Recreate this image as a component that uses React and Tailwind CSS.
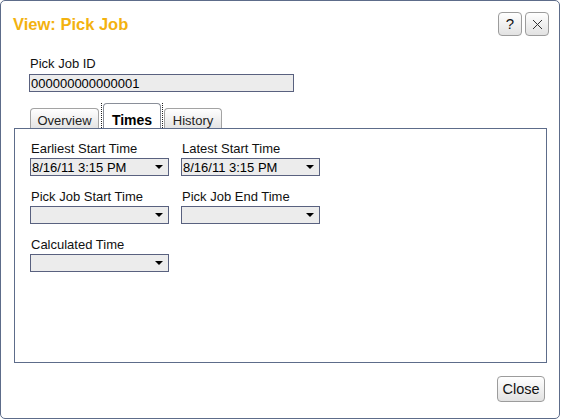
import React from 'react'

const FONT = "font-['Liberation_Sans',Arial,sans-serif]"

function Arrow() {
  return (
    <svg width="8" height="4" viewBox="0 0 8 4" className="shrink-0">
      <path d="M0 0H8L4 4Z" fill="#000" />
    </svg>
  )
}

function DateSelect({ value }) {
  return (
    <div className="flex h-[18px] w-[139px] items-center justify-between border border-[#59617f] bg-[#ececec] pl-[1px] pr-[5px]">
      <span className="text-[13px] leading-[15px] text-black">{value}</span>
      <Arrow />
    </div>
  )
}

function Field({ label, value }) {
  return (
    <div className="flex w-[151px] flex-col">
      <div className="mb-[2px] h-[15px] pl-px text-[13px] leading-[15px] text-[#111]">{label}</div>
      <DateSelect value={value} />
    </div>
  )
}

function SmallButton({ children }) {
  return (
    <button className="flex h-[24px] w-[24px] items-center justify-center rounded-[4px] border border-[#9c9c9c] bg-gradient-to-b from-white to-[#e2e2e2] text-[15px] font-normal text-[#111]">
      {children}
    </button>
  )
}

export default function App() {
  return (
    <div className={`h-[419px] w-[561px] bg-white ${FONT}`}>
      <div className="flex h-[419px] w-[560px] flex-col rounded-[5px] border border-[#5d6c8a]">
        {/* header */}
        <div className="flex items-center justify-between pl-[12px] pr-[10px] pt-[11px]">
          <h1 className="text-[16.5px] font-bold leading-[24px] text-[#f3b20f]">View: Pick Job</h1>
          <div className="flex gap-[3px]">
            <SmallButton>?</SmallButton>
            <SmallButton>
              <svg width="11" height="11" viewBox="0 0 11 11">
                <path d="M1 1L10 10M10 1L1 10" stroke="#333" strokeWidth="1" />
              </svg>
            </SmallButton>
          </div>
        </div>

        {/* id */}
        <div className="mt-[20px] flex flex-col pl-[28px]">
          <div className="mb-[3px] h-[15px] pl-px text-[13px] leading-[15px] text-[#111]">Pick Job ID</div>
          <div className="flex h-[18px] w-[265px] items-center border border-[#59617f] bg-[#ececec] pl-[1px] text-[13px] leading-[15px] text-black">
            000000000000001
          </div>
        </div>

        {/* tabs */}
        <div className="mt-[11px] flex flex-col px-[13px]">
          <div className="ml-[16px] flex h-[25px] items-end">
            <div className="flex h-[20px] w-[69px] items-end justify-center rounded-t-[4px] border border-b-0 border-[#a3a3a3] bg-gradient-to-b from-white to-[#e4e4e4] text-[13px] leading-[15px] text-[#222]">
              Overview
            </div>
            <div className="ml-[2px] flex h-[25px] border-x border-dotted border-[#222] px-px">
              <div className="flex h-[25px] w-[58px] items-end justify-center rounded-t-[4px] border border-b-0 border-[#8a8f99] bg-white text-[14px] font-bold leading-[16px] text-black">
                Times
              </div>
            </div>
            <div className="ml-[1px] flex h-[20px] w-[58px] items-end justify-center rounded-t-[4px] border border-b-0 border-[#a3a3a3] bg-gradient-to-b from-white to-[#e4e4e4] text-[13px] leading-[15px] text-[#222]">
              History
            </div>
          </div>
          <div className="flex h-[235px] w-[533px] flex-col gap-[13px] border border-[#5d6c8a] pl-[15px] pt-[12px]">
            <div className="flex">
              <Field label="Earliest Start Time" value="8/16/11 3:15 PM" />
              <Field label="Latest Start Time" value="8/16/11 3:15 PM" />
            </div>
            <div className="flex">
              <Field label="Pick Job Start Time" value="" />
              <Field label="Pick Job End Time" value="" />
            </div>
            <div className="flex">
              <Field label="Calculated Time" value="" />
            </div>
          </div>
        </div>

        {/* footer */}
        <div className="mt-[13px] flex justify-end pr-[14px]">
          <button className="h-[26px] w-[48px] rounded-[4px] border border-[#9c9c9c] bg-gradient-to-b from-white to-[#e2e2e2] text-[14.5px] leading-[16px] text-[#111]">
            Close
          </button>
        </div>
      </div>
    </div>
  )
}
